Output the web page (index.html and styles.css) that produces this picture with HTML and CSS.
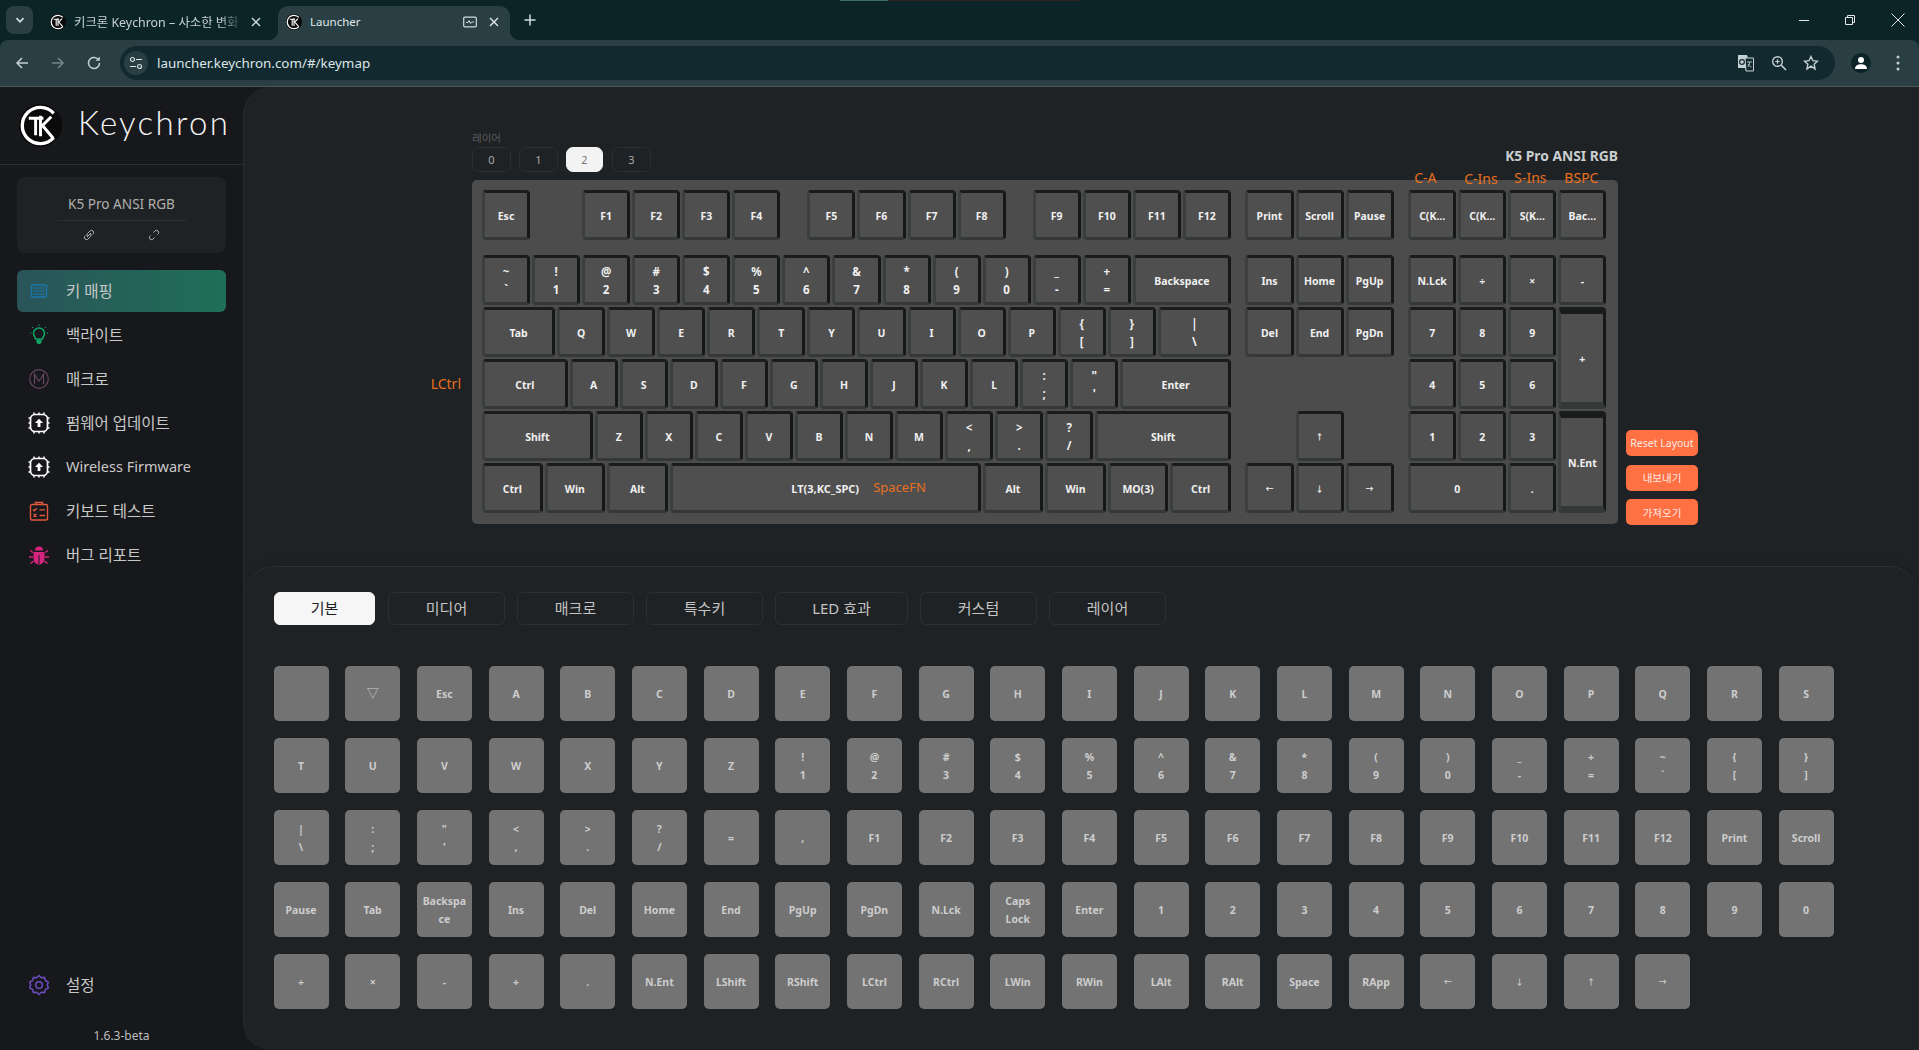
FILE: index.html
```html
<!DOCTYPE html>
<html lang="ko">
<head>
<meta charset="utf-8">
<title>Launcher</title>
<link rel="stylesheet" href="styles.css">
</head>
<body>
<svg class="defs" width="0" height="0">
  <symbol id="kc" viewBox="0 0 44 44">
    <circle cx="22" cy="22" r="22" fill="#0a0a0a"/>
    <path d="M35.500 9.500A18.500 18.500 0 1 0 35.500 34.500" fill="none" stroke="#fff" stroke-width="3.400"/>
    <path d="M10 14.500H25M17 14.500V32" fill="none" stroke="#fff" stroke-width="3"/>
    <path d="M22 12V33M23 23L33 13M24 22L35 35" fill="none" stroke="#fff" stroke-width="3"/>
  </symbol>
  <symbol id="fw" viewBox="0 0 24 24">
    <rect x="3.500" y="3.500" width="17" height="17" rx="4.500" fill="none" stroke="#fff" stroke-width="1.700"/>
    <path d="M7 1.500v2M12 1.500v2M17 1.500v2M7 20.500v2M12 20.500v2M17 20.500v2M1.500 7h2M1.500 12h2M1.500 17h2M20.500 7h2M20.500 12h2M20.500 17h2" stroke="#fff" stroke-width="1.500"/>
    <path d="M12 7.800l4 4.200h-2.600v4h-2.800v-4H8z" fill="#fff"/>
  </symbol>
</svg>

<header class="chrome">
  <div class="tabstrip">
    <i class="load load-a"></i><i class="load load-b"></i>
    <button class="tab-menu"><svg width="12" height="12" viewBox="0 0 12 12"><path d="M2.500 4.200L6 7.800l3.500-3.600" fill="none" stroke="#cfdcde" stroke-width="1.700"/></svg></button>
    <div class="tab tab-off">
      <svg class="fav" width="16" height="16"><use href="#kc"/></svg>
      <span class="tab-title">키크론 Keychron – 사소한 변화</span>
      <svg class="tab-x" width="12" height="12" viewBox="0 0 12 12"><path d="M2 2l8 8M10 2l-8 8" stroke="#cfdcde" stroke-width="1.400"/></svg>
    </div>
    <div class="tab tab-on">
      <svg class="fav" width="16" height="16"><use href="#kc"/></svg>
      <span class="tab-title">Launcher</span>
      <svg class="tab-mem" width="14" height="12" viewBox="0 0 14 12"><rect x=".7" y="1.200" width="12.600" height="9.600" rx="1" fill="none" stroke="#cfdcde" stroke-width="1.200"/><path d="M3 6.500h2l1-2 1.500 3 1-1.500H11" fill="none" stroke="#cfdcde"/></svg>
      <svg class="tab-x" width="12" height="12" viewBox="0 0 12 12"><path d="M2 2l8 8M10 2l-8 8" stroke="#dfe8ea" stroke-width="1.400"/></svg>
    </div>
    <svg class="tab-new" width="12" height="12" viewBox="0 0 12 12"><path d="M6 .5v11M.5 6h11" stroke="#cfdcde" stroke-width="1.500"/></svg>
    <div class="win">
      <svg width="12" height="12" viewBox="0 0 12 12"><path d="M1 6.500h10" stroke="#e6e6e6" stroke-width="1"/></svg>
      <svg width="12" height="12" viewBox="0 0 12 12"><path d="M1.500 3.500h7v7h-7zM3.500 3.500v-2h7v7h-2" fill="none" stroke="#e6e6e6"/></svg>
      <svg width="16" height="16" viewBox="0 0 16 16"><path d="M1.500 1.500l13 13M14.500 1.500l-13 13" stroke="#e6e6e6"/></svg>
    </div>
  </div>
  <div class="toolbar">
    <svg class="tb-ico" width="16" height="16" viewBox="0 0 16 16"><path d="M14 8H3M8 3L3 8l5 5" fill="none" stroke="#c4d0d3" stroke-width="1.500"/></svg>
    <svg class="tb-ico" width="16" height="16" viewBox="0 0 16 16"><path d="M2 8h11M8 3l5 5-5 5" fill="none" stroke="#75878b" stroke-width="1.500"/></svg>
    <svg class="tb-ico" width="16" height="16" viewBox="0 0 16 16"><path d="M13.500 8A5.500 5.500 0 1 1 11.600 3.800" fill="none" stroke="#c4d0d3" stroke-width="1.500"/><path d="M13.800 1.500v4.300H9.500z" fill="#c4d0d3"/></svg>
    <div class="url">
      <span class="site"><svg width="14" height="14" viewBox="0 0 14 14"><circle cx="3.500" cy="3.500" r="2" fill="none" stroke="#d5e0e2" stroke-width="1.200"/><circle cx="10.500" cy="10.500" r="2" fill="none" stroke="#d5e0e2" stroke-width="1.200"/><path d="M7 3.500h6M1 10.500h6" stroke="#d5e0e2" stroke-width="1.200"/></svg></span>
      <span class="url-text">launcher.keychron.com/#/keymap</span>
      <svg class="url-ico" width="18" height="18" viewBox="0 0 18 18"><path d="M1 1h9l1 3h5.500v13H9l-1-3H1z" fill="#c4d0d3"/><path d="M8 4h8.500v13H9z" fill="#122a2f" stroke="#c4d0d3"/><circle cx="5" cy="8" r="2.400" fill="none" stroke="#122a2f" stroke-width="1.200"/><path d="M10 8h5M12.500 8c0 3-1 4-2 5M11 10c1 2 2 2.500 3.500 3" fill="none" stroke="#c4d0d3" stroke-width=".9"/></svg>
      <svg class="url-ico" width="16" height="16" viewBox="0 0 16 16"><circle cx="6.500" cy="6.500" r="4.800" fill="none" stroke="#c4d0d3" stroke-width="1.400"/><path d="M10 10l5 5" stroke="#c4d0d3" stroke-width="1.600"/><path d="M6.500 4.300v4.400M4.300 6.500h4.400" stroke="#c4d0d3" stroke-width="1.200"/></svg>
      <svg class="url-ico" width="16" height="16" viewBox="0 0 16 16"><path d="M8 1.500l1.950 4.200 4.550.55-3.350 3.100.9 4.500L8 11.100l-4.050 2.750.9-4.500L1.500 6.250l4.550-.55z" fill="none" stroke="#c4d0d3" stroke-width="1.400"/></svg>
    </div>
    <span class="avatar"><svg width="14" height="14" viewBox="0 0 14 14"><circle cx="7" cy="4" r="3" fill="#fff"/><path d="M1 13c0-3.500 3-4.800 6-4.800s6 1.300 6 4.800z" fill="#fff"/></svg></span>
    <svg class="dots" width="4" height="16" viewBox="0 0 4 16"><circle cx="2" cy="2" r="1.500" fill="#c4d0d3"/><circle cx="2" cy="8" r="1.500" fill="#c4d0d3"/><circle cx="2" cy="14" r="1.500" fill="#c4d0d3"/></svg>
  </div>
</header>

<div class="app">
  <aside class="side">
    <div class="brand">
      <svg class="brand-logo" width="43" height="43"><use href="#kc"/></svg>
      <span class="wordmark">Keychron</span>
    </div>
    <div class="device">
      <div class="device-name">K5 Pro ANSI RGB</div>
      <div class="device-links">
        <svg width="14" height="14" viewBox="0 0 14 14"><path d="M5 9l4-4M3.500 7.500L2.500 8.500a2.300 2.300 0 0 0 3 3l3-3a2.300 2.300 0 0 0 0-3M10.500 6.500l1-1a2.300 2.300 0 0 0-3-3l-3 3a2.300 2.300 0 0 0 0 3" fill="none" stroke="#b5b5b5" stroke-width="1"/></svg>
        <svg width="14" height="14" viewBox="0 0 14 14"><path d="M3.500 7.500L2.500 8.500a2.300 2.300 0 0 0 3 3l2-2M10.500 6.500l1-1a2.300 2.300 0 0 0-3-3l-2 2" fill="none" stroke="#b5b5b5" stroke-width="1"/></svg>
      </div>
    </div>
    <nav class="nav">
      <a class="item item-on"><svg class="ico" width="24" height="24" viewBox="0 0 24 24"><rect x="4.500" y="6" width="15" height="12" rx="1" fill="none" stroke="#1a78ad" stroke-width="1.300"/><path d="M6.500 9h11M6.500 12h11M6.500 15h11" stroke="#1a78ad" stroke-width="1.400" stroke-dasharray="1.400 .6"/></svg><span class="ko">키 매핑</span></a>
      <a class="item"><svg class="ico" width="24" height="24" viewBox="0 0 24 24"><path d="M8.500 16c0-2-2-3-2-5.500a5.500 5.500 0 0 1 11 0C17.500 13 15.500 14 15.500 16z" fill="none" stroke="#0fa865" stroke-width="1.500"/><path d="M9.500 17h5v2.500l-1.500 1.500h-2l-1.500-1.500z" fill="#0fa865"/><path d="M12 1.500v1.500M5 4l1 1M19 4l-1 1M3 10h1.200M19.800 10H21" stroke="#0fa865" stroke-width="1"/></svg><span class="ko">백라이트</span></a>
      <a class="item"><svg class="ico" width="24" height="24" viewBox="0 0 24 24"><circle cx="12" cy="12" r="9.300" fill="none" stroke="#66485f" stroke-width="1.200"/><path d="M7.500 17V7.200l4.500 7 4.500-7V17" fill="none" stroke="#66485f" stroke-width="1.200"/></svg><span class="ko">매크로</span></a>
      <a class="item"><svg class="ico" width="24" height="24"><use href="#fw"/></svg><span class="ko">펌웨어 업데이트</span></a>
      <a class="item"><svg class="ico" width="24" height="24"><use href="#fw"/></svg><span>Wireless Firmware</span></a>
      <a class="item"><svg class="ico" width="24" height="24" viewBox="0 0 24 24"><rect x="3.500" y="5.500" width="17" height="15.500" rx="1.500" fill="none" stroke="#e2583e" stroke-width="1.400"/><path d="M8.500 5.500V3.500h7v2" fill="none" stroke="#e2583e" stroke-width="1.400"/><path d="M6 10.500l1.300 1.300L9.800 9.200M6.500 15l3 3M9.500 15l-3 3M12.500 10.800H18M12.500 16.500H18" fill="none" stroke="#e2583e" stroke-width="1.300"/></svg><span class="ko">키보드 테스트</span></a>
      <a class="item"><svg class="ico" width="24" height="24" viewBox="0 0 24 24"><path d="M8 7.500a4 4 0 0 1 8 0z" fill="#d6247f"/><path d="M6.500 9h11v6.500c0 3.500-2.500 6-5.500 6s-5.500-2.500-5.500-6z" fill="#d6247f"/><path d="M12 12v9" stroke="#17181b" stroke-width="1"/><path d="M6 9.500L3 7.500M18 9.500l3-2M6 14H2M18 14h4M6.500 18l-3 2.500M17.500 18l3 2.500" stroke="#d6247f" stroke-width="1.500"/></svg><span class="ko">버그 리포트</span></a>
    </nav>
    <div class="side-foot">
      <a class="item"><svg class="ico" width="24" height="24" viewBox="0 0 24 24"><path d="M12 2.500l2.300 2.300 3.200-.4.900 3.100 2.900 1.500-1 3 1 3-2.900 1.500-.9 3.100-3.200-.4-2.300 2.300-2.300-2.300-3.200.4-.9-3.100-2.900-1.500 1-3-1-3 2.900-1.500.9-3.100 3.200.4z" fill="none" stroke="#6f4cc0" stroke-width="1.500"/><circle cx="12" cy="12" r="3.300" fill="none" stroke="#6f4cc0" stroke-width="1.500"/></svg><span class="ko">설정</span></a>
      <div class="version">1.6.3-beta</div>
    </div>
  </aside>

  <main class="main">
    <section class="board">
      <div class="board-col">
        <div class="board-head">
          <div>
            <div class="layer-label">레이어</div>
            <div class="layers">
              <button class="layer">0</button>
              <button class="layer">1</button>
              <button class="layer layer-on">2</button>
              <button class="layer">3</button>
            </div>
          </div>
          <div class="kb-title">K5 Pro ANSI RGB</div>
        </div>
        <div class="keyboard">
          <div class="k u1">Esc</div><i class="s4"></i>
          <div class="k u1">F1</div><div class="k u1">F2</div><div class="k u1">F3</div><div class="k u1">F4</div><i class="s2"></i>
          <div class="k u1">F5</div><div class="k u1">F6</div><div class="k u1">F7</div><div class="k u1">F8</div><i class="s2"></i>
          <div class="k u1">F9</div><div class="k u1">F10</div><div class="k u1">F11</div><div class="k u1">F12</div><i class="s1"></i>
          <div class="k u1">Print</div><div class="k u1">Scroll</div><div class="k u1">Pause</div><i class="s1"></i>
          <div class="k u1">C(K...<b class="tag tag-up">C-A</b></div><div class="k u1">C(K...<b class="tag tag-up tag-low">C-Ins</b></div><div class="k u1">S(K...<b class="tag tag-up">S-Ins</b></div><div class="k u1">Bac...<b class="tag tag-up">BSPC</b></div>

          <div class="k u1 two"><span>~</span><span>`</span></div><div class="k u1 two"><span>!</span><span>1</span></div><div class="k u1 two"><span>@</span><span>2</span></div><div class="k u1 two"><span>#</span><span>3</span></div><div class="k u1 two"><span>$</span><span>4</span></div><div class="k u1 two"><span>%</span><span>5</span></div><div class="k u1 two"><span>^</span><span>6</span></div><div class="k u1 two"><span>&amp;</span><span>7</span></div><div class="k u1 two"><span>*</span><span>8</span></div><div class="k u1 two"><span>(</span><span>9</span></div><div class="k u1 two"><span>)</span><span>0</span></div><div class="k u1 two"><span>_</span><span>-</span></div><div class="k u1 two"><span>+</span><span>=</span></div>
          <div class="k u2">Backspace</div><i class="s1"></i>
          <div class="k u1">Ins</div><div class="k u1">Home</div><div class="k u1">PgUp</div><i class="s1"></i>
          <div class="k u1">N.Lck</div><div class="k u1">÷</div><div class="k u1">×</div><div class="k u1">-</div>

          <div class="k u150">Tab</div>
          <div class="k u1">Q</div><div class="k u1">W</div><div class="k u1">E</div><div class="k u1">R</div><div class="k u1">T</div><div class="k u1">Y</div><div class="k u1">U</div><div class="k u1">I</div><div class="k u1">O</div><div class="k u1">P</div>
          <div class="k u1 two"><span>{</span><span>[</span></div><div class="k u1 two"><span>}</span><span>]</span></div><div class="k u150 two"><span>|</span><span>\</span></div><i class="s1"></i>
          <div class="k u1">Del</div><div class="k u1">End</div><div class="k u1">PgDn</div><i class="s1"></i>
          <div class="k u1">7</div><div class="k u1">8</div><div class="k u1">9</div><div class="k u1 tall">+</div>

          <div class="k u175">Ctrl<b class="tag tag-left">LCtrl</b></div>
          <div class="k u1">A</div><div class="k u1">S</div><div class="k u1">D</div><div class="k u1">F</div><div class="k u1">G</div><div class="k u1">H</div><div class="k u1">J</div><div class="k u1">K</div><div class="k u1">L</div>
          <div class="k u1 two"><span>:</span><span>;</span></div><div class="k u1 two"><span>"</span><span>'</span></div><div class="k u225">Enter</div><i class="s14"></i>
          <div class="k u1">4</div><div class="k u1">5</div><div class="k u1">6</div>

          <div class="k u225">Shift</div>
          <div class="k u1">Z</div><div class="k u1">X</div><div class="k u1">C</div><div class="k u1">V</div><div class="k u1">B</div><div class="k u1">N</div><div class="k u1">M</div>
          <div class="k u1 two"><span>&lt;</span><span>,</span></div><div class="k u1 two"><span>&gt;</span><span>.</span></div><div class="k u1 two"><span>?</span><span>/</span></div><div class="k u275">Shift</div><i class="s5"></i>
          <div class="k u1 arrow">↑</div><i class="s5"></i>
          <div class="k u1">1</div><div class="k u1">2</div><div class="k u1">3</div><div class="k u1 tall">N.Ent</div>

          <div class="k u125">Ctrl</div><div class="k u125">Win</div><div class="k u125">Alt</div>
          <div class="k u625 space">LT(3,KC_SPC)<b class="tag-in">SpaceFN</b></div>
          <div class="k u125">Alt</div><div class="k u125">Win</div><div class="k u125">MO(3)</div><div class="k u125">Ctrl</div><i class="s1"></i>
          <div class="k u1 arrow">←</div><div class="k u1 arrow">↓</div><div class="k u1 arrow">→</div><i class="s1"></i>
          <div class="k u2">0</div><div class="k u1">.</div>
        </div>
      </div>
      <div class="actions">
        <button class="act">Reset Layout</button>
        <button class="act">내보내기</button>
        <button class="act">가져오기</button>
      </div>
    </section>

    <section class="panel">
      <div class="cats">
        <button class="cat cat-on">기본</button>
        <button class="cat">미디어</button>
        <button class="cat">매크로</button>
        <button class="cat">특수키</button>
        <button class="cat cat-wide">LED 효과</button>
        <button class="cat">커스텀</button>
        <button class="cat">레이어</button>
      </div>
      <div class="palette">
        <div class="p"></div><div class="p p-tri">▽</div><div class="p">Esc</div><div class="p">A</div><div class="p">B</div><div class="p">C</div><div class="p">D</div><div class="p">E</div><div class="p">F</div><div class="p">G</div><div class="p">H</div><div class="p">I</div><div class="p">J</div><div class="p">K</div><div class="p">L</div><div class="p">M</div><div class="p">N</div><div class="p">O</div><div class="p">P</div><div class="p">Q</div><div class="p">R</div><div class="p">S</div>

        <div class="p">T</div><div class="p">U</div><div class="p">V</div><div class="p">W</div><div class="p">X</div><div class="p">Y</div><div class="p">Z</div><div class="p">!<br>1</div><div class="p">@<br>2</div><div class="p">#<br>3</div><div class="p">$<br>4</div><div class="p">%<br>5</div><div class="p">^<br>6</div><div class="p">&amp;<br>7</div><div class="p">*<br>8</div><div class="p">(<br>9</div><div class="p">)<br>0</div><div class="p">_<br>-</div><div class="p">+<br>=</div><div class="p">~<br>`</div><div class="p">{<br>[</div><div class="p">}<br>]</div>

        <div class="p">|<br>\</div><div class="p">:<br>;</div><div class="p">"<br>'</div><div class="p">&lt;<br>,</div><div class="p">&gt;<br>.</div><div class="p">?<br>/</div><div class="p">=</div><div class="p">,</div><div class="p">F1</div><div class="p">F2</div><div class="p">F3</div><div class="p">F4</div><div class="p">F5</div><div class="p">F6</div><div class="p">F7</div><div class="p">F8</div><div class="p">F9</div><div class="p">F10</div><div class="p">F11</div><div class="p">F12</div><div class="p">Print</div><div class="p">Scroll</div>

        <div class="p">Pause</div><div class="p">Tab</div><div class="p">Backspa<br>ce</div><div class="p">Ins</div><div class="p">Del</div><div class="p">Home</div><div class="p">End</div><div class="p">PgUp</div><div class="p">PgDn</div><div class="p">N.Lck</div><div class="p">Caps<br>Lock</div><div class="p">Enter</div><div class="p">1</div><div class="p">2</div><div class="p">3</div><div class="p">4</div><div class="p">5</div><div class="p">6</div><div class="p">7</div><div class="p">8</div><div class="p">9</div><div class="p">0</div>

        <div class="p">÷</div><div class="p">×</div><div class="p">-</div><div class="p">+</div><div class="p">.</div><div class="p">N.Ent</div><div class="p">LShift</div><div class="p">RShift</div><div class="p">LCtrl</div><div class="p">RCtrl</div><div class="p">LWin</div><div class="p">RWin</div><div class="p">LAlt</div><div class="p">RAlt</div><div class="p">Space</div><div class="p">RApp</div><div class="p p-arrow">←</div><div class="p p-arrow">↓</div><div class="p p-arrow">↑</div><div class="p p-arrow">→</div>
      </div>
    </section>
  </main>
</div>
</body>
</html>
```
FILE: styles.css
```css
* { box-sizing: border-box; }
html, body { margin: 0; height: 100%; }
body {
  width: 1919px; height: 1050px; overflow: hidden;
  display: flex; flex-direction: column;
  background: #17181b;
  font-family: "Noto Sans", "Noto Sans CJK KR", sans-serif;
}
button { font-family: inherit; padding: 0; cursor: pointer; }
.defs { position: absolute; }

/* browser chrome */
.chrome { flex: none; height: 87px; background: #0b2428; display: flex; flex-direction: column; }
.tabstrip { position: relative; height: 40px; display: flex; align-items: flex-end; padding-left: 6px; }
.load { position: absolute; top: 0; height: 1px; }
.load-a { left: 840px; width: 48px; background: #3f6b5f; }
.load-b { left: 888px; width: 192px; background: #2a2120; }
.tab-menu { width: 27px; height: 28px; margin-bottom: 6px; border: 0; border-radius: 8px; background: #2a3f44; display: flex; align-items: center; justify-content: center; }
.tab { position: relative; height: 34px; padding: 0 10px 3px 8px; display: flex; align-items: center; color: #c6d2d4; font-size: 11.500px; }
.tab-off { width: 238px; margin-left: 7px; padding: 0 16px 3px 10px; font-size: 12.400px; }
.tab-on { width: 232px; background: #2a3f44; border-radius: 10px 10px 0 0; color: #dfe8ea; }
.tab-on::before, .tab-on::after { content: ""; position: absolute; bottom: 0; width: 10px; height: 10px; }
.tab-on::before { left: -10px; background: radial-gradient(circle at 0 0, transparent 10px, #2a3f44 10.500px); }
.tab-on::after { right: -10px; background: radial-gradient(circle at 100% 0, transparent 10px, #2a3f44 10.500px); }
.fav { flex: none; margin-right: 8px; }
.tab-title { flex: 1; white-space: nowrap; overflow: hidden; -webkit-mask-image: linear-gradient(90deg, #000 85%, transparent); mask-image: linear-gradient(90deg, #000 85%, transparent); }
.tab-on .tab-title { -webkit-mask-image: none; mask-image: none; }
.tab-x { flex: none; margin-left: 6px; }
.tab-mem { flex: none; margin-right: 5px; }
.tab-new { margin: 0 0 14px 14px; }
.win { margin-left: auto; height: 40px; display: flex; align-items: center; gap: 34px; padding: 0 13px 0 0; }
.toolbar { flex: none; height: 47px; padding: 6px 16px 7px 14px; background: #2a3f44; border-bottom: 1px solid #4b5759; border-radius: 8px 8px 0 0; display: flex; align-items: center; }
.tb-ico { flex: none; margin-right: 20px; }
.url { flex: none; width: 1715px; height: 34px; margin-left: -2px; border-radius: 17px; background: #122a2f; display: flex; align-items: center; padding: 0 16px 0 4px; color: #dce6e8; font-size: 13.400px; }
.site { flex: none; width: 24px; height: 24px; border-radius: 50%; background: #2a3f44; display: flex; align-items: center; justify-content: center; margin-right: 9px; }
.url-text { flex: 1; }
.url-ico { flex: none; margin-left: 16px; }
.avatar { flex: none; width: 20px; height: 20px; margin-left: 16px; border-radius: 50%; background: #0b2428; display: flex; align-items: center; justify-content: center; }
.dots { flex: none; margin-left: 25px; }

/* layout */
.app { flex: 1; display: flex; min-height: 0; }
.side { flex: none; width: 243px; display: flex; flex-direction: column; background: #17181b; color: #c8c8c8; }
.brand { height: 78px; border-bottom: 1px solid #2b2d2f; padding: 0 0 0 19px; display: flex; align-items: center; }
.brand-logo { margin-top: -1px; }
.wordmark { margin: -8px 0 0 16px; font-family: Lato, sans-serif; font-weight: 300; font-size: 33px; letter-spacing: 2.300px; color: #f4f4f4; }
.device { margin: 12px 17px 0; height: 76px; border-radius: 8px; background: #1f2224; padding-top: 17px; }
.device-name { margin: 0 40px; height: 27px; text-align: center; font-size: 13.600px; line-height: 20px; color: #b0b0b0; border-bottom: 1px solid #2d3032; white-space: nowrap; }
.device-links { display: flex; justify-content: center; gap: 51px; margin-top: 7px; }
.nav { margin: 17px 17px 0; display: flex; flex-direction: column; gap: 2px; }
.item { height: 42px; padding: 0 0 2px 10px; border-radius: 6px; display: flex; align-items: center; font-size: 14.500px; color: #c8c8c8; white-space: nowrap; }
.item .ko { font-size: 15.500px; }
.item-on { background: linear-gradient(90deg, #2a5459, #1f6f57); }
.ico { flex: none; margin: 2px 15px 0 0; }
.side-foot { margin: auto 17px 0; }
.version { margin: 20px 0 4px; height: 20px; text-align: center; font-size: 12px; line-height: 20px; color: #bdbdbd; }

.main { flex: 1; min-width: 0; display: flex; flex-direction: column; background: #1f2224; border-left: 1px solid #2a2d2f; border-radius: 28px 0 0 28px; }
.board { flex: none; height: 479px; padding: 44px 0 0 228px; display: flex; align-items: flex-end; }
.board-col { width: 1146px; padding-bottom: 42px; }
.board-head { display: flex; justify-content: space-between; align-items: flex-start; margin-bottom: 8px; height: 41px; }
.layer-label { height: 16px; font-size: 10.500px; line-height: 14px; color: #5a5c5d; }
.layers { display: flex; gap: 8px; }
.layer { width: 39px; height: 25px; border: 1px solid #2c2f31; border-radius: 7px; background: transparent; color: #a8a8a8; font-size: 11px; }
.layer-on { background: #f3f3f3; border-color: #f3f3f3; color: #777; width: 37px; margin-right: 1px; }
.kb-title { margin-top: 16px; font-size: 13.800px; font-weight: 700; line-height: 18px; color: #c9ced0; }

/* keyboard: a 0.25u grid, filled in reading order */
.keyboard {
  height: 344px; padding: 10px 0 0 10px; border-radius: 5px; background: #4c4c4c;
  display: grid; grid-template-columns: repeat(90, 12.525px);
  grid-template-rows: 65px repeat(5, 52px);
}
.keyboard > i { display: block; }
.s1 { grid-column-end: span 1; } .s2 { grid-column-end: span 2; } .s4 { grid-column-end: span 4; } .s5 { grid-column-end: span 5; } .s14 { grid-column-end: span 14; }
.u1 { grid-column-end: span 4; } .u125 { grid-column-end: span 5; } .u150 { grid-column-end: span 6; } .u175 { grid-column-end: span 7; }
.u2 { grid-column-end: span 8; } .u225 { grid-column-end: span 9; } .u275 { grid-column-end: span 11; } .u625 { grid-column-end: span 25; }
.k {
  position: relative; align-self: start; height: 50px; margin-right: 2px; padding-top: 1px;
  display: flex; align-items: center; justify-content: center;
  background: #4f4f4f; border-style: solid; border-width: 3px;
  border-color: #1a1c1c #161818 #343838 #3c3f3f; border-radius: 4px;
  color: #f0f0f0; font-size: 10.500px; font-weight: 700; white-space: nowrap;
}
.k.tall { grid-row-end: span 2; height: 102px; border-top-width: 7px; border-bottom-width: 7px; }
.k.two { flex-direction: column; font-size: 11.500px; line-height: 18px; }
.k.arrow { font-size: 8px; }
.k.space { font-size: 11px; }
.tag { position: absolute; font-weight: 400; font-size: 14px; line-height: 18px; color: #e8701f; }
.tag-up { top: -24px; left: 3px; }
.tag-low { top: -23px; }
.tag-left { right: calc(100% + 24px); top: 13px; }
.tag-in { position: absolute; left: calc(50% + 48px); top: 12px; font-weight: 400; font-size: 13px; line-height: 18px; color: #e8701f; }

.actions { display: flex; flex-direction: column; gap: 8.500px; margin: 0 0 41px 8px; }
.act { width: 72px; height: 26px; border: 0; border-radius: 5px; background: #ff7043; color: #fbeae4; font-size: 10.500px; }

/* bottom panel */
.panel { flex: 1; min-height: 0; padding: 25px 0 0 30px; border-top: 1px solid #2c3032; border-radius: 30px 30px 0 0; box-shadow: 0 -3px 6px rgba(0, 0, 0, .12); }
.cats { display: flex; gap: 12px; }
.cat { width: 117px; height: 33px; padding-bottom: 2px; border: 1px solid #2c2f31; border-radius: 6px; background: transparent; color: #c3c3c3; font-size: 15px; }
.cat-wide { width: 133px; }
.cat-on { width: 101px; margin-right: 1px; background: #f6f6f6; border-color: #f6f6f6; color: #222; }
.palette { margin: 41px 0 0 -.5px; display: grid; grid-template-columns: repeat(22, 55px); grid-auto-rows: 55px; column-gap: 16.680px; row-gap: 17px; }
.p { border-radius: 5px; background: #737373; color: #cdcdcd; font-size: 10.500px; font-weight: 700; line-height: 18px; display: flex; align-items: center; justify-content: center; text-align: center; }
.p-tri { font-weight: 400; font-size: 12px; }
.p-arrow { font-size: 8px; }
```
